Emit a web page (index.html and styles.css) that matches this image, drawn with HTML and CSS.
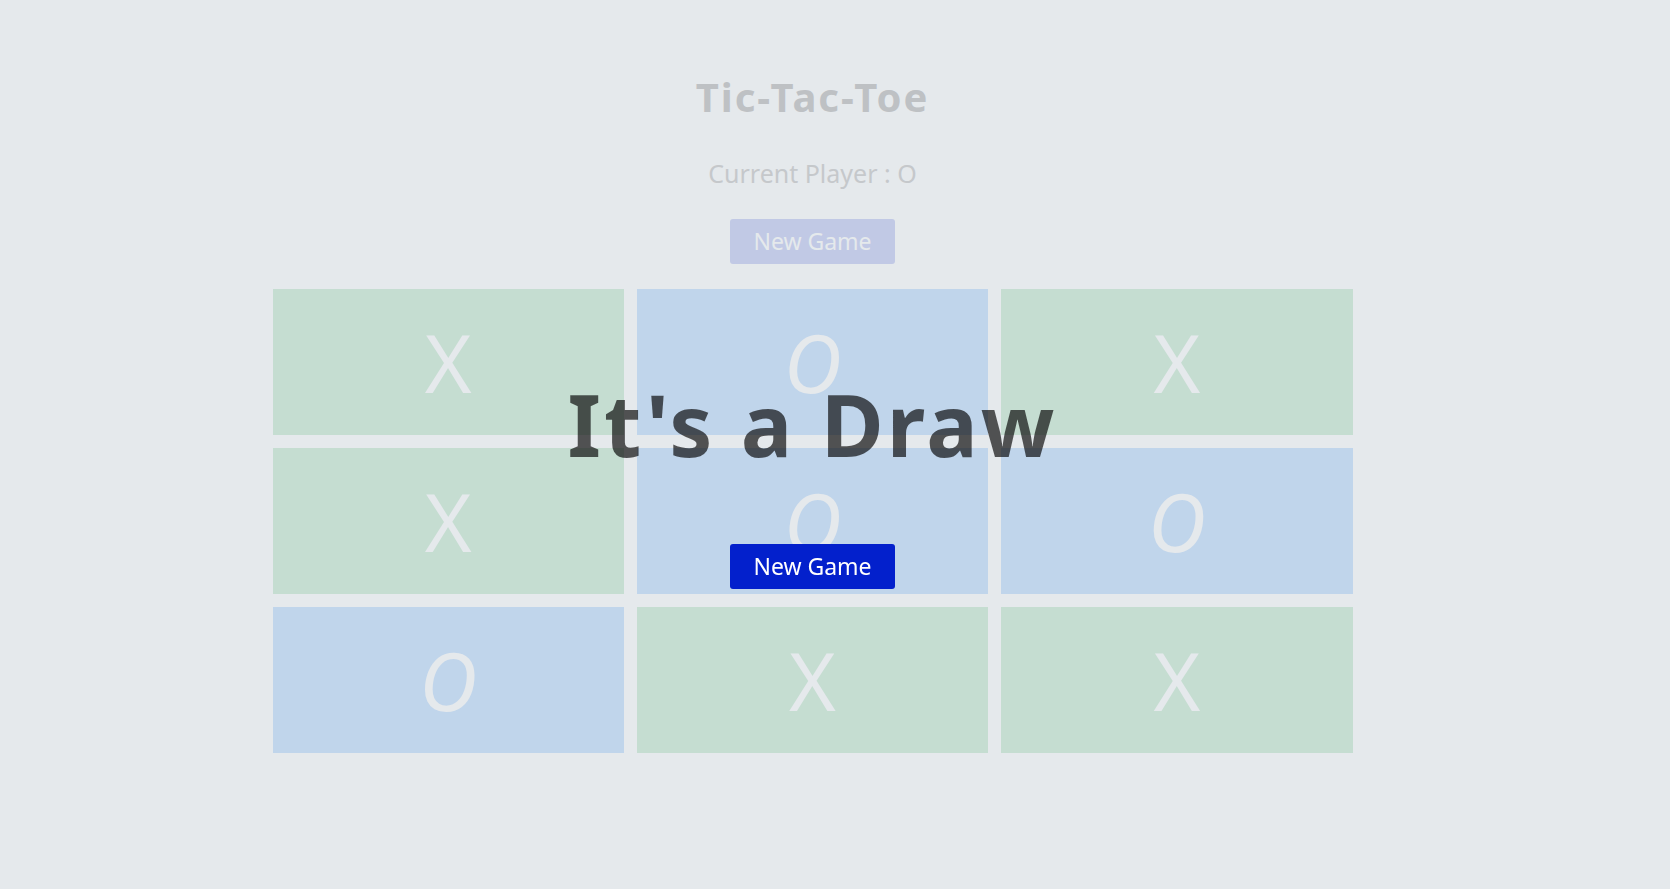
FILE: index.html
```html
<!DOCTYPE html>
<html lang="en">
<head>
<meta charset="utf-8">
<title>Tic-Tac-Toe</title>
<link rel="stylesheet" href="styles.css">
</head>
<body>
<main class="game">
  <h1 class="title">Tic-Tac-Toe</h1>
  <p class="status">Current Player : O</p>
  <button class="btn btn-faded">New Game</button>
  <div class="board">
    <div class="cell cell-x"><span class="mark">X</span></div>
    <div class="cell cell-o"><span class="mark mark-o">O</span></div>
    <div class="cell cell-x"><span class="mark">X</span></div>
    <div class="cell cell-x"><span class="mark">X</span></div>
    <div class="cell cell-o"><span class="mark mark-o">O</span></div>
    <div class="cell cell-o"><span class="mark mark-o">O</span></div>
    <div class="cell cell-o"><span class="mark mark-o">O</span></div>
    <div class="cell cell-x"><span class="mark">X</span></div>
    <div class="cell cell-x"><span class="mark">X</span></div>
  </div>
</main>
<div class="overlay">
  <div class="overlay-inner">
    <h2 class="result">It's a Draw</h2>
    <button class="btn btn-solid">New Game</button>
  </div>
</div>
</body>
</html>
```

FILE: styles.css
```css
html, body {
  margin: 0;
  padding: 0;
  background: #e5e9ec;
  font-family: "Comic Sans MS", "Noto Sans", sans-serif;
  height: 100%;
  overflow: hidden;
}

.game {
  width: 1625px;
  padding-top: 77px;
  display: flex;
  flex-direction: column;
  align-items: center;
}

.title {
  margin: 0;
  font-size: 40px;
  line-height: 40px;
  font-weight: 700;
  color: #bec1c4;
  letter-spacing: 2px;
}

.status {
  margin: 44px 0 0;
  font-size: 25px;
  line-height: 25px;
  color: #c5c8cb;
}

.btn {
  width: 165px;
  height: 45px;
  border: none;
  border-radius: 3px;
  font-family: "Comic Sans MS", "Noto Sans", sans-serif;
  font-size: 23px;
  line-height: 45px;
  padding: 0;
}

.btn-faded {
  margin-top: 33px;
  background: #c1c9e5;
  color: #e5e9ec;
}

.board {
  margin-top: 25px;
  width: 1080px;
  display: grid;
  grid-template-columns: repeat(3, 1fr);
  grid-auto-rows: 146px;
  gap: 13px;
}

.cell {
  display: flex;
  align-items: center;
  justify-content: center;
}

.cell-x { background: #c5ddd1; }
.cell-o { background: #c0d5eb; }

.mark {
  font-size: 80px;
  line-height: 1;
  color: #e5e9ec;
}

.mark-o {
  font-style: italic;
}

.overlay {
  position: fixed;
  inset: 0;
}

.overlay-inner {
  width: 1625px;
  padding-top: 381px;
  display: flex;
  flex-direction: column;
  align-items: center;
}

.result {
  margin: 0;
  font-size: 86px;
  line-height: 86px;
  font-weight: 700;
  color: rgba(0, 0, 0, 0.65);
  letter-spacing: 3px;
}

.btn-solid {
  margin-top: 77px;
  background: #0320cc;
  color: #ffffff;
}
```
